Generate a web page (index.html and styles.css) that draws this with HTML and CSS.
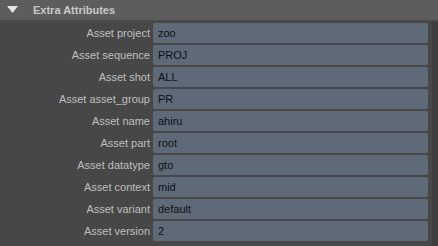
FILE: index.html
```html
<!DOCTYPE html>
<html>
<head>
<meta charset="utf-8">
<link rel="stylesheet" href="styles.css">
</head>
<body>
<div class="panel">
  <div class="header">
    <svg class="arrow" width="11" height="7" viewBox="0 0 11 7"><path d="M0 0H11L5.5 7Z" fill="#e6e6e6"/></svg>
    <span class="title">Extra Attributes</span>
  </div>
  <div class="body">
    <div class="form">
      <label>Asset project</label><div class="field">zoo</div>
      <label>Asset sequence</label><div class="field">PROJ</div>
      <label>Asset shot</label><div class="field">ALL</div>
      <label>Asset asset_group</label><div class="field">PR</div>
      <label>Asset name</label><div class="field">ahiru</div>
      <label>Asset part</label><div class="field">root</div>
      <label>Asset datatype</label><div class="field">gto</div>
      <label>Asset context</label><div class="field">mid</div>
      <label>Asset variant</label><div class="field">default</div>
      <label>Asset version</label><div class="field">2</div>
    </div>
    <div class="scroll"></div>
  </div>
</div>
</body>
</html>
```

FILE: styles.css
```css
html, body {
  margin: 0;
  padding: 0;
  background: #474747;
  width: 438px;
  height: 246px;
  overflow: hidden;
  font-family: "Liberation Sans", Arial, sans-serif;
}
.panel {
  display: flex;
  flex-direction: column;
  height: 246px;
}
.header {
  height: 20px;
  background: #5d5d5d;
  display: flex;
  align-items: center;
  border-bottom: 2px solid #4a4a4a;
  box-sizing: content-box;
}
.arrow {
  margin-left: 7px;
  margin-top: -2px;
}
.title {
  margin-left: 15px;
  font-weight: bold;
  font-size: 11px;
  color: #c9c9c9;
}
.body {
  flex: 1;
  display: flex;
}
.form {
  flex: 1;
  display: grid;
  grid-template-columns: 150px 275px;
  column-gap: 3px;
  row-gap: 2px;
  padding-top: 1px;
  align-content: start;
}
label {
  font-size: 11px;
  color: #bfbfbf;
  text-align: right;
  line-height: 20px;
  height: 20px;
}
.field {
  height: 20px;
  line-height: 20px;
  background: #5e6a77;
  border-radius: 2px;
  color: #0e1114;
  font-size: 11px;
  padding-left: 5px;
  box-sizing: border-box;
}
.scroll {
  width: 6px;
  background: #3e3e3e;
}
```
